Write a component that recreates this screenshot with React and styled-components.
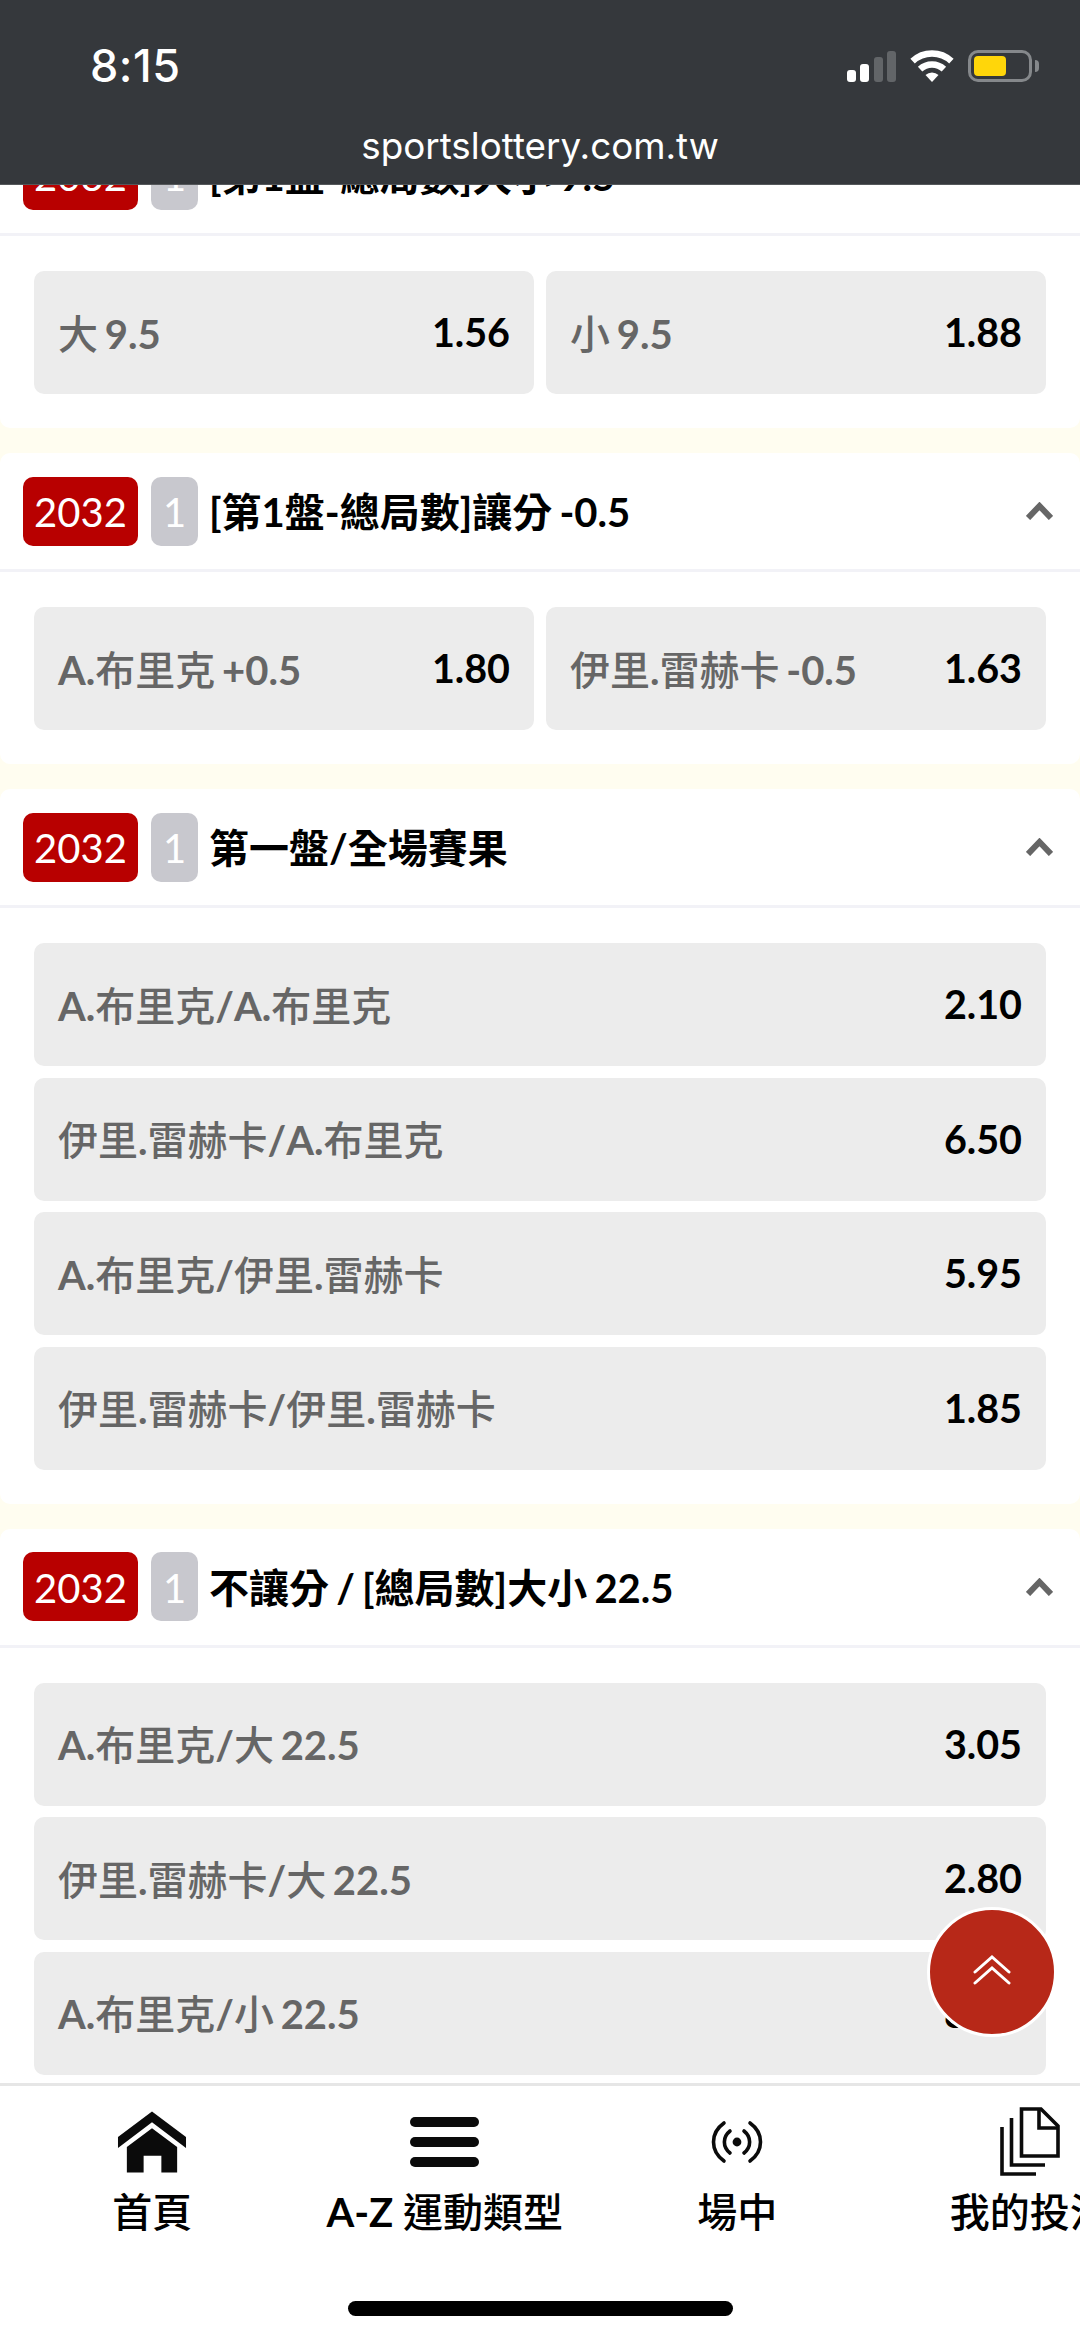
import React from 'react';
import styled, {createGlobalStyle} from 'styled-components';

const FONT = `Lato, "Noto Sans CJK TC", sans-serif`;

const GlobalStyle = createGlobalStyle`
  html, body {
    margin: 0;
    padding: 0;
    background: #fff;
  }
  * {
    box-sizing: border-box;
  }
`;

const Page = styled.div`
  position: relative;
  width: 1080px;
  height: 2339px;
  display: flex;
  flex-direction: column;
  overflow: hidden;
  font-family: ${FONT};
  background: #fffdf0;
`;

const Browser = styled.header`
  flex: none;
  position: relative;
  z-index: 2;
  height: 185px;
  padding: 50px 48px 0 90px;
  background: #35383c;
  border-bottom: 1px solid #55585b;
  color: #fff;
  font-family: Inter, sans-serif;
`;

const StatusRow = styled.div`
  display: flex;
  align-items: center;
  justify-content: space-between;
  height: 32px;
`;

const Clock = styled.span`
  font-size: 45px;
  font-weight: 500;
  letter-spacing: 0.5px;
  line-height: 32px;
`;

const StatusIcons = styled.div`
  display: flex;
  align-items: center;
  gap: 14px;
`;

const Signal = styled.div`
  display: flex;
  align-items: flex-end;
  gap: 4.5px;
  height: 32px;
`;

const SignalBar = styled.i`
  display: block;
  width: 9px;
  height: ${props => props.$h}px;
  border-radius: 3px;
  background: ${props => props.$on ? '#fff' : '#626568'};
`;

const Battery = styled.div`
  position: relative;
  width: 64px;
  height: 32px;
  padding: 3px;
  border: 3px solid #85888b;
  border-radius: 10px;
  &::after {
    content: '';
    position: absolute;
    right: -10px;
    top: 7px;
    width: 4px;
    height: 12px;
    border-radius: 0 4px 4px 0;
    background: #85888b;
  }
`;

const BatteryFill = styled.div`
  width: 32px;
  height: 100%;
  border-radius: 4px;
  background: #ffd60a;
`;

const Domain = styled.div`
  margin: 41px -48px 0 -90px;
  text-align: center;
  font-size: 36.8px;
  font-weight: 400;
  line-height: 46px;
`;

const Scroller = styled.main`
  flex: 1;
  min-height: 0;
  overflow: hidden;
`;

const MarketList = styled.div`
  display: flex;
  flex-direction: column;
  gap: 25px;
  margin-top: -68px;
`;

const Card = styled.section`
  background: #fff;
  border-radius: 10px;
`;

const CardHeader = styled.div`
  display: flex;
  align-items: center;
  height: 119px;
  padding: 0 27px 0 23px;
  border-bottom: 3px solid #f2f2f7;
`;

const TimeBadge = styled.span`
  flex: none;
  display: flex;
  align-items: center;
  justify-content: center;
  width: 115px;
  height: 69px;
  padding-top: 2px;
  border-radius: 10px;
  background: #b80000;
  color: #fff;
  font-size: 40px;
  font-weight: 400;
`;

const PeriodBadge = styled(TimeBadge)`
  width: 47px;
  margin-left: 13px;
  background: #c8c8ce;
`;

const Title = styled.h2`
  flex: 1;
  margin: 0 0 0 11px;
  padding-top: 2px;
  color: #000;
  font-size: 40px;
  font-weight: 700;
  line-height: 50px;
  word-spacing: -2.5px;
`;

const Chevron = styled.svg`
  flex: none;
  width: 27px;
  height: 18px;
  fill: none;
  stroke: #666;
  stroke-width: 6;
`;

const Options = styled.div`
  display: grid;
  grid-template-columns: repeat(${props => props.$cols}, 1fr);
  gap: 11.5px 12px;
  padding: 35px 34px 34px;
`;

const Option = styled.div`
  display: flex;
  align-items: center;
  justify-content: space-between;
  height: 123px;
  padding: 0 24px 2px;
  border-radius: 10px;
  background: #ececec;
`;

const OptionLabel = styled.span`
  color: #666;
  font-size: 40px;
  font-weight: 700;
  white-space: nowrap;
  word-spacing: -3px;
`;

const Odds = styled.span`
  color: #000;
  font-size: 39.5px;
  font-weight: 700;
`;

// the CJK runs sit a step lighter than the bold latin around them
const CjkRun = styled.span`
  font-weight: 500;
`;

const TopButton = styled.button`
  position: absolute;
  right: 23px;
  bottom: 302px;
  z-index: 3;
  display: flex;
  align-items: center;
  justify-content: center;
  width: 130px;
  height: 130px;
  padding: 0 0 4px;
  border: 3px solid #fff;
  border-radius: 50%;
  background: #b72818;
`;

const TabBar = styled.nav`
  flex: none;
  position: relative;
  height: 256px;
  padding: 20px 0 0 6px;
  display: flex;
  align-items: flex-start;
  overflow: hidden;
  background: #fff;
  border-top: 3px solid #e6e6e6;
`;

const Tab = styled.div`
  flex: 0 0 292.5px;
  display: flex;
  flex-direction: column;
  align-items: center;
  gap: 11px;
`;

const TabIcon = styled.div`
  display: flex;
  align-items: center;
  justify-content: center;
  height: 72px;
  color: #0b0b0b;
`;

const TabLabel = styled.span`
  color: #000;
  font-size: 40px;
  font-weight: 700;
  line-height: 46px;
  white-space: nowrap;
`;

const HomeBar = styled.div`
  position: absolute;
  left: 348px;
  bottom: 23px;
  width: 385px;
  height: 15px;
  border-radius: 8px;
  background: #000;
`;

const MenuBars = styled.div`
  display: flex;
  flex-direction: column;
  gap: 10px;
`;

const MenuBar = styled.i`
  display: block;
  width: 69px;
  height: 10px;
  border-radius: 5px;
  background: #0b0b0b;
`;

const Mixed = ({text}) => text.split(/([\u4e00-\u9fff]+)/).map((part, i) => (
    i % 2 ? <CjkRun key={i}>{part}</CjkRun> : part
));

const WifiIcon = () => (
    <svg width="44" height="32" viewBox="0 0 44 32" fill="none" stroke="#fff" strokeWidth="6.5">
        <path d="M2.6 11.2A28.5 28.5 0 0 1 41.4 11.2"/>
        <path d="M10.1 19.2A17.5 17.5 0 0 1 33.9 19.2"/>
        <path d="M22 32L15.5 25A9.5 9.5 0 0 1 28.5 25Z" fill="#fff" stroke="none"/>
    </svg>
);

const HomeIcon = () => (
    <svg width="70" height="64" viewBox="0 0 71 64" fill="currentColor">
        <path d="M35.5 1L70 27V38L35.5 12L1 38V27Z"/>
        <path d="M35.5 18L61 37V63H45V46H27V63H10V37Z"/>
    </svg>
);

const LiveIcon = () => (
    <svg width="52" height="44" viewBox="0 0 52 44" fill="none" stroke="currentColor" strokeWidth="3.6" strokeLinecap="round">
        <circle cx="26" cy="22" r="4.4" fill="currentColor" stroke="none"/>
        <path d="M13 3C-1 13 -1 31 13 41"/>
        <path d="M39 3C53 13 53 31 39 41"/>
        <path d="M19 11C11.5 17 11.5 27 19 33"/>
        <path d="M33 11C40.5 17 40.5 27 33 33"/>
    </svg>
);

const BetsIcon = () => (
    <svg width="60" height="70" viewBox="0 0 60 70" fill="none" stroke="currentColor" strokeWidth="3.6">
        <path d="M21.5 2H41L58 19V49H21.5Z"/>
        <path d="M39 2V21H58"/>
        <path d="M11.5 11V58H45"/>
        <path d="M2 20V67H36"/>
    </svg>
);

const DoubleUp = () => (
    <svg width="38" height="30" viewBox="0 0 38 30" fill="none" stroke="#fff" strokeWidth="3" strokeLinecap="round">
        <path d="M2 17L19 2L36 17"/>
        <path d="M2 28L19 13L36 28"/>
    </svg>
);

const markets = [
    {
        title: '[第1盤-總局數]大小 9.5',
        cols: 2,
        options: [['大 9.5', '1.56'], ['小 9.5', '1.88']],
    },
    {
        title: '[第1盤-總局數]讓分 -0.5',
        cols: 2,
        options: [['A.布里克 +0.5', '1.80'], ['伊里.雷赫卡 -0.5', '1.63']],
    },
    {
        title: '第一盤/全場賽果',
        cols: 1,
        options: [
            ['A.布里克/A.布里克', '2.10'],
            ['伊里.雷赫卡/A.布里克', '6.50'],
            ['A.布里克/伊里.雷赫卡', '5.95'],
            ['伊里.雷赫卡/伊里.雷赫卡', '1.85'],
        ],
    },
    {
        title: '不讓分 / [總局數]大小 22.5',
        cols: 1,
        options: [
            ['A.布里克/大 22.5', '3.05'],
            ['伊里.雷赫卡/大 22.5', '2.80'],
            ['A.布里克/小 22.5', '8.50'],
        ],
    },
];

const tabs = [
    {label: '首頁', icon: <HomeIcon/>},
    {
        label: 'A-Z 運動類型',
        icon: <MenuBars><MenuBar/><MenuBar/><MenuBar/></MenuBars>,
    },
    {label: '場中', icon: <LiveIcon/>},
    {label: '我的投注', icon: <BetsIcon/>},
];

export default function App() {
    return (
        <Page>
            <GlobalStyle/>
            <Browser>
                <StatusRow>
                    <Clock>8:15</Clock>
                    <StatusIcons>
                        <Signal>
                            <SignalBar $h={12} $on/>
                            <SignalBar $h={18} $on/>
                            <SignalBar $h={25}/>
                            <SignalBar $h={31}/>
                        </Signal>
                        <WifiIcon/>
                        <Battery><BatteryFill/></Battery>
                    </StatusIcons>
                </StatusRow>
                <Domain>sportslottery.com.tw</Domain>
            </Browser>
            <Scroller>
                <MarketList>
                    {markets.map(market => (
                        <Card key={market.title}>
                            <CardHeader>
                                <TimeBadge>2032</TimeBadge>
                                <PeriodBadge>1</PeriodBadge>
                                <Title>{market.title}</Title>
                                <Chevron viewBox="0 0 27 18">
                                    <path d="M2 16L13.5 4L25 16"/>
                                </Chevron>
                            </CardHeader>
                            <Options $cols={market.cols}>
                                {market.options.map(([label, odds]) => (
                                    <Option key={label}>
                                        <OptionLabel><Mixed text={label}/></OptionLabel>
                                        <Odds>{odds}</Odds>
                                    </Option>
                                ))}
                            </Options>
                        </Card>
                    ))}
                </MarketList>
            </Scroller>
            <TopButton aria-label="top"><DoubleUp/></TopButton>
            <TabBar>
                {tabs.map(tab => (
                    <Tab key={tab.label}>
                        <TabIcon>{tab.icon}</TabIcon>
                        <TabLabel><Mixed text={tab.label}/></TabLabel>
                    </Tab>
                ))}
                <HomeBar/>
            </TabBar>
        </Page>
    );
}
